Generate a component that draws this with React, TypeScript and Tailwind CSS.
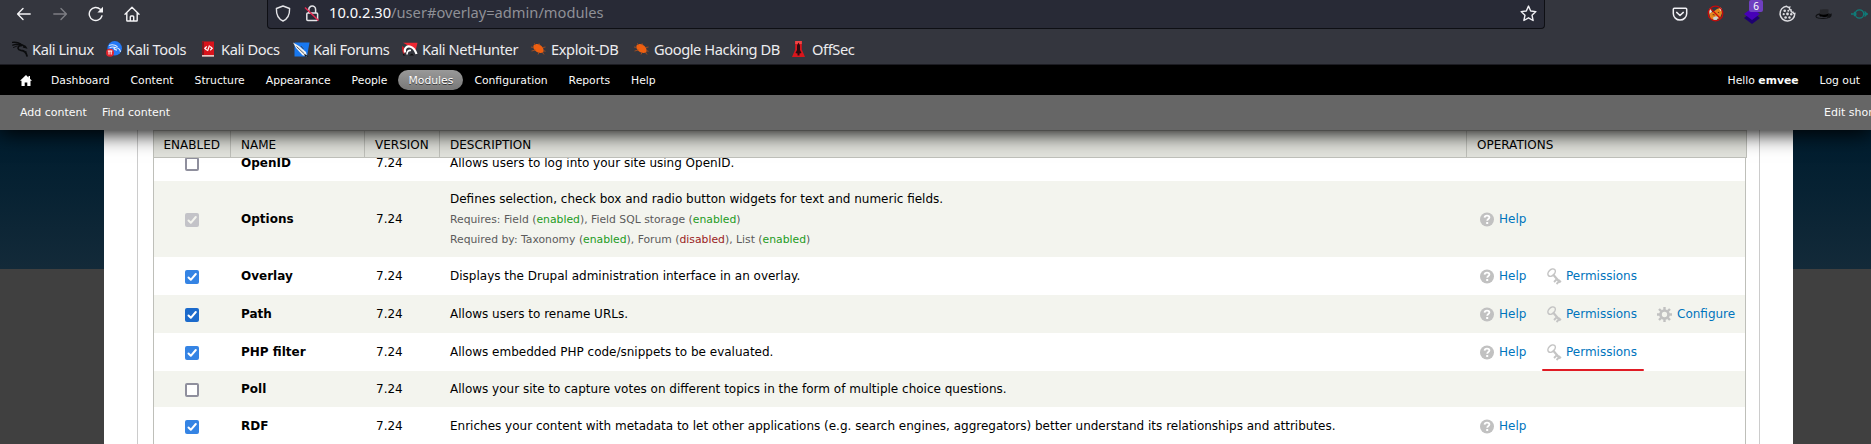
import type { ReactNode } from "react";

/* ---------- browser chrome icons ---------- */

const BackIcon = () => (
  <svg width="16" height="16" viewBox="0 0 16 16" fill="none" stroke="#f4f4f6" strokeWidth="1.4" strokeLinecap="round" strokeLinejoin="round">
    <path d="M14.2 8H1.8M7 2.6 1.6 8 7 13.4" />
  </svg>
);
const ForwardIcon = () => (
  <svg width="16" height="16" viewBox="0 0 16 16" fill="none" stroke="#7d7e84" strokeWidth="1.4" strokeLinecap="round" strokeLinejoin="round">
    <path d="M1.8 8h12.4M9 2.6 14.4 8 9 13.4" />
  </svg>
);
const ReloadIcon = () => (
  <svg width="16" height="16" viewBox="0 0 16 16" fill="none" stroke="#f4f4f6" strokeWidth="1.4" strokeLinecap="round">
    <path d="M14 9.800A6.500 6.500 0 1 1 12.300 3.300" />
    <path d="M15 .8v5.600H9.400z" fill="#f4f4f6" stroke="none" />
  </svg>
);
const HomeIcon = () => (
  <svg width="16" height="16" viewBox="0 0 16 16" fill="none" stroke="#f4f4f6" strokeWidth="1.4" strokeLinecap="round" strokeLinejoin="round">
    <path d="M1 8.2 8 1.2l7 7M2.8 6.8v7.6c0 .4.2.6.6.6h9.2c.4 0 .6-.2.6-.6V6.8M6.3 14.8v-4c0-.5.3-.8.8-.8h1.8c.5 0 .8.3.8.8v4" />
  </svg>
);
const ShieldIcon = () => (
  <svg width="16" height="17" viewBox="0 0 16 17" fill="none" stroke="#e4e4e8" strokeWidth="1.4" strokeLinejoin="round">
    <path d="M8 1 14.6 3.5c.2 6-1.600 10.300-6.600 12.500C3 13.800 1.200 9.500 1.400 3.500z" />
  </svg>
);
const InsecureLockIcon = () => (
  <svg width="16" height="17" viewBox="0 0 16 17" fill="none" strokeWidth="1.5">
    <rect x="2.800" y="8" width="10.800" height="7.500" rx="1" stroke="#e4e4e8" />
    <path d="M4.800 8V4.500a3.400 3.400 0 0 1 6.800 0V8" stroke="#e4e4e8" />
    <path d="M1 2.500 14.500 15.500" stroke="#e22850" strokeWidth="1.600" />
  </svg>
);
const StarIcon = () => (
  <svg width="17" height="17" viewBox="0 0 17 17" fill="none" stroke="#f0f0f4" strokeWidth="1.4" strokeLinejoin="round">
    <path d="m8.500 1.100 2.200 4.900 5.200.6-3.900 3.600 1.100 5.300-4.600-2.700-4.600 2.700L5 10.200 1.100 6.600 6.300 6z" />
  </svg>
);
const PocketIcon = () => (
  <svg width="16" height="16" viewBox="0 0 16 16" fill="none" stroke="#f0f0f4" strokeWidth="1.500" strokeLinecap="round" strokeLinejoin="round">
    <path d="M2.300 2.200h11.400c.6 0 1 .4 1 1v4.200a6.700 6.700 0 0 1-13.400 0V3.200c0-.6.4-1 1-1zM4.700 6.400 8 9.500l3.300-3.100" />
  </svg>
);
const FoxIcon = () => (
  <svg width="17" height="17" viewBox="0 0 17 17">
    <path d="M2 8 6 7l4-3 4-1.500 1 5.500-2 5-5 2.500-4.500-2z" fill="#e8851c" />
    <path d="m2 4 1.800-.5L5 7 2.500 8.500zM13 2.500l1.500 1-.3 3-1.700-2z" fill="#efe5dc" />
    <path d="m6 12.500 3-1.300 2.500.8-2 3-3-.3z" fill="#c9d0d6" />
    <path d="m5 10 2-1 1 1.500zM10.500 7.500l1.500-.7.300 1.500z" fill="#5c3218" />
    <circle cx="8.500" cy="8.500" r="7.300" fill="none" stroke="#c80a0a" strokeWidth="1.200" />
    <path d="m3.500 3.500 10 10" stroke="#c80a0a" strokeWidth="1.200" />
  </svg>
);
const LayersIcon = () => (
  <svg width="18" height="17" viewBox="0 0 18 17">
    <path d="M9 5 17 11 9 17 1 11z" fill="#1e0070" />
    <path d="M9 1 17 7 9 13 1 7z" fill="#4700b8" />
  </svg>
);
const CookieIcon = () => (
  <svg width="17" height="17" viewBox="0 0 17 17">
    <path d="M7.500 1.200a7.400 7.400 0 1 0 8.300 7.300c-1 .3-1.700-.2-1.800-1.200-1.500.1-2.200-.8-1.900-2.200-1.500-.3-2-1.400-1.500-2.800-.8.200-2.100-.2-3.100-1.100z" fill="none" stroke="#dcdce0" strokeWidth="1.500" />
    <g fill="#dcdce0">
      <circle cx="5.700" cy="5.700" r="1.300" /><circle cx="9.300" cy="5.700" r="1" /><circle cx="4.700" cy="9.200" r="1.100" />
      <circle cx="8.500" cy="9" r="1.400" /><circle cx="12.200" cy="9.200" r="1.200" /><circle cx="6.600" cy="12.500" r="1.300" /><circle cx="10.500" cy="12.500" r="1.200" />
    </g>
  </svg>
);
const HatIcon = () => (
  <svg width="18" height="12" viewBox="0 0 18 12">
    <ellipse cx="8.500" cy="8" rx="7.500" ry="2.400" fill="none" stroke="#111214" strokeWidth="1.100" transform="rotate(-3 8.500 8)" />
    <path d="M4.500 8 5 1.800c2-.8 6-.8 8.500-.2L13.200 8c-2 1.200-6.500 1.200-8.700 0z" fill="#26272b" />
    <path d="M4.500 6c2.500 1.200 6 1 8.800-.3v2.200c-2 1.300-6.500 1.300-8.800.1z" fill="#000" />
    <path d="m13 6.500 4-1-1.500 3.500-3.500 1z" fill="#111214" />
  </svg>
);
const NodeIcon = () => (
  <svg width="17" height="12" viewBox="0 0 17 12" fill="none" stroke="#0f7b78" strokeWidth="1.300">
    <circle cx="8.500" cy="6" r="4.200" />
    <path d="M0 6h5M12.500 6H17M3 4l2 2-2 2M13.500 3.500 16 6l-2.500 2.500" />
  </svg>
);

/* ---------- bookmark icons ---------- */

const KaliDragon = () => (
  <svg width="16" height="16" viewBox="0 0 16 16" fill="none" stroke="#0b0c0e" strokeLinecap="round">
    <path d="M.5 1.300C4 1 7.500 1.800 9.800 4.300M.8 4.200C4 2.800 7 3.300 9 5" strokeWidth="1.300" />
    <path d="M7.500 3c2 .6 3.500 1.200 5.700 2.300l.8 1.300-2.500-.6" strokeWidth="1.500" />
    <path d="M7.800 4.500C5 6 5.500 9 9 9.300c3.500.2 5.300 2 6 5.700" strokeWidth="1.700" />
    <path d="M1.500 6.500 5 5M12.500 10.500l2 .5" strokeWidth=".9" />
  </svg>
);
const KaliTools = () => (
  <svg width="16" height="16" viewBox="0 0 16 16" fill="none">
    <circle cx="8.700" cy="7.300" r="7.200" fill="#2478f5" />
    <path d="M3 4.500c3-1.200 6-.7 8.500 1.200M3.500 7c2-1.200 4.500-1.200 6.500-.2 2.500.2 4 1.700 4.500 4M8 6.500c-.3 2 1 2.300 3 2.600" stroke="#dceaff" strokeWidth="1.100" />
    <circle cx="4" cy="11.700" r="4" fill="#e3222b" />
    <path d="M1.800 10h4.500M3 10v3.600M5.200 10v3.600" stroke="#fff" strokeWidth="1" />
  </svg>
);
const KaliDocs = () => (
  <svg width="14" height="16" viewBox="0 0 14 16">
    <path d="M1 .5h12v14H1z" fill="#d8131b" />
    <path d="M1 .5h2v14H1z" fill="#86141c" />
    <path d="M1 14h12v1.700H1z" fill="#e8c8c4" />
    <path d="M5.800 5.500 3.800 7.300l2 1.900M9.200 5.500l2 1.800-2 1.900M8.500 4.500 6.500 10" stroke="#fff" strokeWidth="1.200" fill="none" />
  </svg>
);
const KaliForums = () => (
  <svg width="17" height="15" viewBox="0 0 17 15">
    <path d="M1.500.5h15L14 14.500H1.500z" fill="#1878f0" />
    <path d="M0 .5 6 4l7 6 1 4.500-4.500-1.300L3 6z" fill="#f1f1f0" />
    <path d="m3.500 4.500 7.500 7M8 4l2.500 3" stroke="#40454e" strokeWidth=".9" />
    <path d="m11 11.500 4.500 3h-3.500z" fill="#111" />
  </svg>
);
const NetHunter = () => (
  <svg width="16" height="14" viewBox="0 0 16 14">
    <path d="M1 .8h14.500L13.500 9 10 6 5 3z" fill="#ef2832" />
    <path d="m0 4 4 3-2 5.500C.3 10.500-.2 7 0 4z" fill="#d01a24" />
    <path d="M3 10.500C2 6 5 3.700 8.500 4.700c3 .8 4.500 3 6 7.300" fill="none" stroke="#fff" strokeWidth="2.200" />
    <path d="M5 12.500c0-3 1.500-4.500 4-4" fill="none" stroke="#fff" strokeWidth="1.600" />
    <path d="m7 13.500 3-2 2 2zM1 11.500l2.500 2H1z" fill="#111" />
  </svg>
);
const ExploitBug = () => (
  <svg width="15" height="12" viewBox="0 0 15 12">
    <path d="M2.500 2.500C5 .2 8 .6 10.500 3c2 1.800 2.500 4 1.800 6.500C9 10.500 6 9.800 4 7.500 2.500 6 2 4.500 2.500 2.500z" fill="#ee5f10" />
    <path d="m0 4 3 .5M.5 8l4-1M3 .5 5 2M8 .3 9 2.500M12 4.500l2.500-.5M12 7.500l2.500.8M8 9.500 7 11.500M11.500 9.500l1.500 2" stroke="#a34f22" strokeWidth=".9" />
  </svg>
);
const OffSecIcon = () => (
  <svg width="13" height="16" viewBox="0 0 13 16">
    <path d="M3.200 0h6.600v8.500L13 16H0l3.200-7.500z" fill="#d8161c" />
    <path d="M3.200 0h6.600v3H3.200z" fill="#ef4444" />
    <path d="m6.500 1.500 1.500 3V9l1.500 3-2 .5v2h-2v-2l-2-.5L5 9V4.500z" fill="#2b0b10" />
  </svg>
);

type Bookmark = { icon: ReactNode; label: string; cell: string };
const bookmarks: Bookmark[] = [
  { icon: <KaliDragon />, label: "Kali Linux", cell: "w-[94px]" },
  { icon: <KaliTools />, label: "Kali Tools", cell: "w-[95px]" },
  { icon: <KaliDocs />, label: "Kali Docs", cell: "w-[92px]" },
  { icon: <KaliForums />, label: "Kali Forums", cell: "w-[109px]" },
  { icon: <NetHunter />, label: "Kali NetHunter", cell: "w-[129px]" },
  { icon: <ExploitBug />, label: "Exploit-DB", cell: "w-[103px]" },
  { icon: <ExploitBug />, label: "Google Hacking DB", cell: "w-[158px]" },
  { icon: <OffSecIcon />, label: "OffSec", cell: "w-[80px]" },
];

function BrowserChrome() {
  return (
    <header className="relative z-30 h-[65px] shrink-0 border-b border-[#1c1c22] bg-[#34363e] font-['Noto_Sans',sans-serif]">
      <div className="flex h-[29px]">
        <div className="flex h-[27px] w-[267px] items-center gap-5 pl-4">
          <BackIcon />
          <ForwardIcon />
          <ReloadIcon />
          <HomeIcon />
        </div>
        <div className="flex h-[29px] w-[1278px] items-center rounded-b border border-t-0 border-[#0e0f14] bg-[#282a36] pb-[2px] pl-[7px] pr-[7px]">
          <ShieldIcon />
          <span className="ml-[13px]"><InsecureLockIcon /></span>
          <span className="ml-[9px] whitespace-pre pb-px text-[14.667px] leading-none text-[#8f9097]">
            <span className="text-[#fbfbfe]">10.0.2.30</span>/user#overlay=admin/modules
          </span>
          <span className="ml-auto"><StarIcon /></span>
        </div>
        <div className="flex h-[27px] items-center pl-[127px]">
          <span className="w-[35px]"><PocketIcon /></span>
          <span className="w-9"><FoxIcon /></span>
          <span className="relative w-9 pt-1">
            <LayersIcon />
            <span className="absolute -top-[3px] left-[6px] flex h-[12px] w-[14px] items-center justify-center rounded-[2px] bg-[#6f3fc0] text-[10px] leading-none text-white">6</span>
          </span>
          <span className="w-9"><CookieIcon /></span>
          <span className="w-9"><HatIcon /></span>
          <NodeIcon />
        </div>
      </div>
      <nav className="flex h-[35px] items-center pl-3 pt-[5px]">
        {bookmarks.map((b) => (
          <div key={b.label} className={`flex shrink-0 items-center ${b.cell}`}>
            <span className="flex w-5 shrink-0">{b.icon}</span>
            <span className="whitespace-nowrap pb-px text-[14.667px] leading-5 tracking-[-0.42px] text-[#ececef]">{b.label}</span>
          </div>
        ))}
      </nav>
    </header>
  );
}

const menu = ["Dashboard", "Content", "Structure", "Appearance", "People", "Modules", "Configuration", "Reports", "Help"];

function AdminToolbar() {
  return (
    <div className="relative z-20 shrink-0 text-[10.8px] shadow-[0_3px_20px_#000]">
      <div className="flex h-[30px] items-center bg-black pl-[20px] text-[#fafafa]">
        <svg width="12" height="11" viewBox="0 0 12 11" className="mr-[9px]">
          <path d="M6 0 0 5.800h1.500V11h3.200V7.500h2.600V11h3.200V5.800H12L10 3.800V1H8.500v1.400z" fill="#fff" />
        </svg>
        <div className="flex gap-px">
          {menu.map((m) => (
            <span
              key={m}
              className={
                m === "Modules"
                  ? "flex h-5 items-center rounded-full bg-linear-to-b from-[#999] to-[#787878] px-[10px] pt-[2px] text-white [text-shadow:0_1px_0_#333]"
                  : "flex h-5 items-center px-[10px] pt-[2px]"
              }
            >
              {m}
            </span>
          ))}
        </div>
        <span className="ml-auto pt-[2px]">Hello <b>emvee</b></span>
        <span className="ml-[21px] mr-[11px] pt-[2px]">Log out</span>
      </div>
      <div className="flex h-[35px] items-center gap-[15px] overflow-hidden bg-[#666] pl-5 pt-px text-[11px] text-[#fafafa]">
        <span>Add content</span>
        <span>Find content</span>
        <span className="ml-auto w-[47px] whitespace-nowrap">Edit shortcuts</span>
      </div>
    </div>
  );
}

/* ---------- modules table ---------- */

function Checkbox({ state }: { state: "off" | "on" | "active" | "locked" }) {
  if (state === "off") return <span className="block size-[14px] rounded-[2px] border-2 border-[#8f8f9d] bg-white" />;
  const fill = { on: "bg-[#3584e4]", active: "bg-[#1b6acb]", locked: "bg-[#c3c3c8]" }[state];
  return (
    <span className={`block size-[14px] rounded-[2px] ${fill}`}>
      <svg width="14" height="14" viewBox="0 0 14 14" fill="none" stroke={state === "locked" ? "#f3f4ee" : "#fff"} strokeWidth="2" strokeLinecap="round" strokeLinejoin="round">
        <path d="m3.500 7.500 2.300 2.300L10.800 4" />
      </svg>
    </span>
  );
}

const HelpGlyph = () => (
  <svg width="14" height="15" viewBox="0 0 14 15">
    <circle cx="7" cy="7.500" r="7" fill="#c1c1c1" />
    <path d="M4.600 5.600C4.700 4.200 5.700 3.600 7 3.600s2.400.7 2.400 1.900c0 1.400-2.200 1.600-2.200 3.200" fill="none" stroke="#fff" strokeWidth="1.800" />
    <rect x="6.200" y="10" width="2" height="2" fill="#fff" />
  </svg>
);
const KeyGlyph = () => (
  <svg width="15" height="17" viewBox="0 0 15 17" fill="none" stroke="#c4c4c4">
    <ellipse cx="4.600" cy="4.600" rx="4.300" ry="2.900" strokeWidth="1.500" transform="rotate(-45 4.600 4.600)" />
    <path d="m6.500 7 6.500 7.500" strokeWidth="2.200" />
    <path d="M9.500 11.500 7 14M12 13.500 9.500 16M11.500 12l2.500 2" strokeWidth="1.800" />
  </svg>
);
const GearGlyph = () => (
  <svg width="15" height="15" viewBox="0 0 15 15" fill="none" stroke="#c1c1c1">
    <circle cx="7.500" cy="7.500" r="4" strokeWidth="2.700" />
    <path d="M7.500 0v3M7.500 12v3M0 7.500h3M12 7.500h3M2 2l2.200 2.200M10.800 10.800 13 13M13 2l-2.200 2.200M4.200 10.800 2 13" strokeWidth="2.400" />
  </svg>
);

const On = () => <span className="text-[#229b22]">enabled</span>;
const Off = () => <span className="text-[#992222]">disabled</span>;

type Row = {
  name: string;
  state: "off" | "on" | "active" | "locked";
  text: string;
  height: string;
  details?: ReactNode;
  ops: string[];
  marked?: boolean;
};
const rows: Row[] = [
  { name: "OpenID", state: "off", text: "Allows users to log into your site using OpenID.", height: "h-9", ops: [] },
  {
    name: "Options", state: "locked", height: "h-[76px]", ops: ["Help"],
    text: "Defines selection, check box and radio button widgets for text and numeric fields.",
    details: (
      <div className="-mb-px pt-px text-[10.8px] leading-5 text-[#5b5b5b]">
        <div>Requires: Field (<On />), Field SQL storage (<On />)</div>
        <div>Required by: Taxonomy (<On />), Forum (<Off />), List (<On />)</div>
      </div>
    ),
  },
  { name: "Overlay", state: "on", text: "Displays the Drupal administration interface in an overlay.", height: "h-[38px]", ops: ["Help", "Permissions"] },
  { name: "Path", state: "active", text: "Allows users to rename URLs.", height: "h-[38px]", ops: ["Help", "Permissions", "Configure"] },
  { name: "PHP filter", state: "on", text: "Allows embedded PHP code/snippets to be evaluated.", height: "h-[38px]", ops: ["Help", "Permissions"], marked: true },
  { name: "Poll", state: "off", text: "Allows your site to capture votes on different topics in the form of multiple choice questions.", height: "h-9", ops: [] },
  { name: "RDF", state: "on", height: "h-[38px]", ops: ["Help"], text: "Enriches your content with metadata to let other applications (e.g. search engines, aggregators) better understand its relationships and attributes." },
];

function Operation({ kind, marked }: { kind: string; marked?: boolean }) {
  if (kind === "Help")
    return <a className="flex w-[67px] items-center"><HelpGlyph /><span className="pl-[5px]">Help</span></a>;
  if (kind === "Permissions")
    return (
      <a className="relative flex w-[110px] items-center">
        <KeyGlyph /><span className="pl-1">Permissions</span>
        {marked && <span className="absolute -left-[5px] top-[26px] h-[2px] w-[102px] rounded bg-[#e01b24]" />}
      </a>
    );
  return <a className="flex items-center"><GearGlyph /><span className="pl-[5px]">Configure</span></a>;
}

function ModulesTable() {
  return (
    <div className="w-[1594px] text-[12px] text-black">
      <div className="relative z-10 flex h-7 items-center border border-[#bebfb9] bg-[#e1e2dc] leading-none">
        <span className="flex h-full w-[77px] items-center border-r border-[#bebfb9] pl-[9.5px] pt-0.5">ENABLED</span>
        <span className="flex h-full w-[134px] items-center border-r border-[#bebfb9] pl-[10px] pt-0.5">NAME</span>
        <span className="flex h-full w-[75px] items-center border-r border-[#bebfb9] pl-[10px] pt-0.5">VERSION</span>
        <span className="flex h-full w-[1027px] items-center border-r border-[#bebfb9] pl-[10px] pt-0.5">DESCRIPTION</span>
        <span className="flex h-full items-center pl-[10px] pt-0.5">OPERATIONS</span>
      </div>
      <div className="-mt-[13px] w-[1593px] border-x border-[#bebfb9]">
        {rows.map((r, i) => (
          <div key={r.name} className={`flex items-center whitespace-nowrap ${r.height} ${i % 2 ? "bg-[#f3f4ee]" : "bg-white"}`}>
            <span className="w-[87px] shrink-0 pl-[31px] pt-[2px]"><Checkbox state={r.state} /></span>
            <b className="w-[135px] shrink-0">{r.name}</b>
            <span className="w-[74px] shrink-0">7.24</span>
            <div className="w-[1030px] shrink-0 leading-5">{r.text}{r.details}</div>
            <div className="flex text-[#0074bd]">
              {r.ops.map((o) => <Operation key={o} kind={o} marked={r.marked} />)}
            </div>
          </div>
        ))}
      </div>
    </div>
  );
}

export default function App() {
  return (
    <div className="flex h-[444px] w-[1871px] flex-col overflow-hidden bg-[#404040] font-['DejaVu_Sans',sans-serif]">
      <BrowserChrome />
      <AdminToolbar />
      <main className="grid min-h-0 flex-1 grid-cols-[104px_1689px_78px]">
        <div className="h-[139px] bg-linear-to-b from-[#001c2e] to-[#132a39]" />
        <div className="overflow-hidden bg-white px-[33px]">
          <div className="h-full border-x border-[#ccc] pl-[15px]">
            <ModulesTable />
          </div>
        </div>
        <div className="h-[139px] bg-linear-to-b from-[#001c2e] to-[#132a39]" />
      </main>
    </div>
  );
}
